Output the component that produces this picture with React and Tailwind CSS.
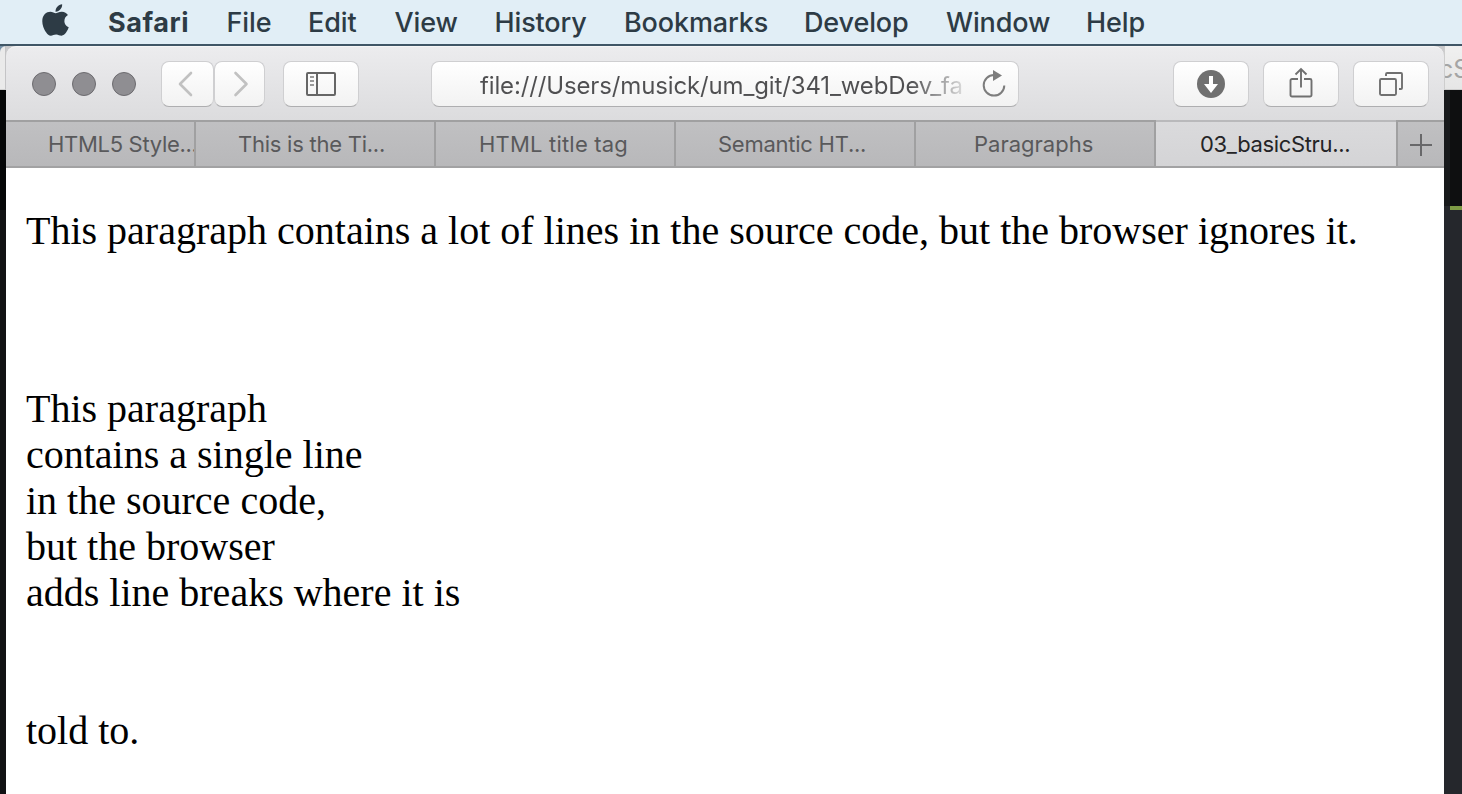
import React from "react";
import { FaApple } from "react-icons/fa";

const menus = [
  { label: "Safari", cls: "w-[118.500px] font-bold tracking-[0.55px]" },
  { label: "File", cls: "w-[81.500px]" },
  { label: "Edit", cls: "w-[86.500px]" },
  { label: "View", cls: "w-[100px]" },
  { label: "History", cls: "w-[129.500px]" },
  { label: "Bookmarks", cls: "w-[180px]" },
  { label: "Develop", cls: "w-[142px]" },
  { label: "Window", cls: "w-[140px]" },
  { label: "Help", cls: "w-[80px]" },
];

const tabs = [
  { label: "HTML5 Style...", cls: "w-[190px] pl-[42px] border-r-2 tracking-[-0.3px]" },
  { label: "This is the Ti...", cls: "w-[240px] pl-[42px] border-r-2 tracking-[-0.25px]" },
  { label: "HTML title tag", cls: "w-[240px] pl-[43px] border-r-2 tracking-[0.2px]" },
  { label: "Semantic HT...", cls: "w-[240px] pl-[42px] border-r-2 tracking-[-0.25px]" },
  { label: "Paragraphs", cls: "w-[240px] pl-[58px] border-r-2" },
];

const buttonCls =
  "flex h-[46px] shrink-0 items-center justify-center rounded-[8px] border border-[#cfcfd1] border-b-[#aeaeb0] bg-linear-to-b from-white to-[#f2f2f2]";

function MenuBar() {
  return (
    <header className="flex h-[46px] items-center border-b-2 border-[#405666] bg-[#e1eef6] pl-[40px] text-[27px] font-medium tracking-[-0.13px] text-[#2d3b45]">
      <div className="w-[68px] pb-[5px] pl-[2px]">
        <FaApple className="h-[36px] w-[27px]" />
      </div>
      {menus.map((m) => (
        <span key={m.label} className={`shrink-0 whitespace-nowrap pt-[2px] leading-[40px] ${m.cls}`}>
          {m.label}
        </span>
      ))}
    </header>
  );
}

function Light() {
  return <span className="h-6 w-6 rounded-full border border-[#6c6b6f] bg-[#8f8e92]" />;
}

function Toolbar() {
  return (
    <div className="flex h-[74px] items-center rounded-t-[10px] border-t border-[#f6f6f6] bg-linear-to-b from-[#ececee] to-[#dcdcde] pb-px pl-[26px] pr-[15px] pt-px">
      <div className="flex gap-4">
        <Light />
        <Light />
        <Light />
      </div>
      <div className={`ml-[25px] w-[53px] ${buttonCls}`}>
        <svg className="mr-[4px]" width="20" height="28" viewBox="0 0 20 28" fill="none" stroke="#c1c1c1" strokeWidth="2.6" strokeLinecap="round" strokeLinejoin="round">
          <path d="M15 3 4 14l11 11" />
        </svg>
      </div>
      <div className={`w-[51px] ${buttonCls}`}>
        <svg width="20" height="28" viewBox="0 0 20 28" fill="none" stroke="#c1c1c1" strokeWidth="2.6" strokeLinecap="round" strokeLinejoin="round">
          <path d="M5.500 3l11 11-11 11" />
        </svg>
      </div>
      <div className={`ml-[18px] w-[76px] ${buttonCls}`}>
        <svg width="30" height="24" viewBox="0 0 30 24" fill="none" stroke="#666" strokeWidth="2">
          <rect x="1" y="1" width="28" height="22" rx="1" />
          <path d="M11 1v22" />
          <path d="M4 5h4M4 9h4M4 13h4" stroke="#999" />
        </svg>
      </div>
      <div className={`ml-[72px] w-[588px] ${buttonCls}`}>
        <div className="mr-auto ml-[48px] w-[482px] overflow-hidden whitespace-nowrap bg-linear-to-r from-[#4f4f51] from-89% to-[#d8d8d8] bg-clip-text pt-[4px] text-[24px] leading-[32px] tracking-[-0.14px] text-transparent">
          file:///Users/musick/um_git/341_webDev_fa
        </div>
        <svg className="mr-[12px] shrink-0" width="24" height="28" viewBox="0 0 24 28" fill="none">
          <path d="M12 5A10.300 10.300 0 1 0 22.300 15.500" stroke="#7d7d7d" strokeWidth="2" />
          <path d="M11 0 20 5.500 11 11z" fill="#7d7d7d" />
        </svg>
      </div>
      <div className="ml-auto flex gap-[14px]">
        <div className={`w-[76px] ${buttonCls}`}>
          <svg width="28" height="28" viewBox="0 0 28 28">
            <circle cx="14" cy="14" r="14" fill="#707070" />
            <path d="M12 6h4v8h5l-7 9-7-9h5z" fill="#fff" />
          </svg>
        </div>
        <div className={`w-[76px] ${buttonCls}`}>
          <svg className="-mt-[1px]" width="24" height="32" viewBox="0 0 24 32" fill="none" stroke="#707070" strokeWidth="1.900">
            <path d="M9 12H3a1.500 1.500 0 0 0-1.500 1.500V28A1.500 1.500 0 0 0 3 29.500h18a1.500 1.500 0 0 0 1.500-1.500V13.500A1.500 1.500 0 0 0 21 12h-6" />
            <path d="M12 20.500V2M6.500 7.500 12 2l5.500 5.500" />
          </svg>
        </div>
        <div className={`w-[76px] ${buttonCls}`}>
          <svg width="24" height="24" viewBox="0 0 24 24" fill="none" stroke="#707070" strokeWidth="1.900">
            <rect x="1" y="7" width="16" height="16" rx="1.200" />
            <path d="M7 4V2.200A1.200 1.200 0 0 1 8.200 1H22a1 1 0 0 1 1 1v14a1 1 0 0 1-1 1h-2" />
          </svg>
        </div>
      </div>
    </div>
  );
}

function TabBar() {
  return (
    <div className="flex h-[48px] border-b-2 border-[#a2a2a3] text-[22px] leading-[44px] text-[#59595b]">
      {tabs.map((t) => (
        <div key={t.label} className={`shrink-0 overflow-hidden whitespace-nowrap border-t-2 border-[#a0a0a1] bg-linear-to-b from-[#c0c0c2] to-[#b8b8ba] ${t.cls}`}>
          {t.label}
        </div>
      ))}
      <div className="w-[240px] shrink-0 border-t-2 border-[#b9b9bb] bg-linear-to-b from-[#dadadc] to-[#d4d4d6] pl-[44px] tracking-[-0.35px] text-[#242426]">
        03_basicStru...
      </div>
      <div className="flex w-[48px] items-center justify-center border-l-2 border-t-2 border-[#a0a0a1] bg-linear-to-b from-[#c0c0c2] to-[#b8b8ba] pt-[2px]">
        <svg width="22" height="22" viewBox="0 0 22 22" stroke="#68686a" strokeWidth="2">
          <path d="M11 0v22M0 11h22" />
        </svg>
      </div>
    </div>
  );
}

export default function App() {
  return (
    <div className="flex h-[794px] w-[1462px] flex-col overflow-hidden font-['Inter',sans-serif]">
      <MenuBar />
      <div className="flex flex-1 bg-linear-to-b from-[#c9c9cb] to-[#e3e3e3] to-[44px]">
        <div className="flex w-[6px] flex-col bg-[#7690a6]">
          <div className="h-[44px] rounded-tl-[8px] border-b border-r border-b-[#cfcfcf] border-r-[#c4c4c6] bg-[#eaeaea]" />
          <div className="h-[120px] bg-[#050607]" />
          <div className="flex-1 bg-[#111214]" />
        </div>
        <main className="flex w-[1438px] flex-col">
          <Toolbar />
          <TabBar />
          <div className="flex-1 bg-white px-[20px] pt-[40px] font-['Liberation_Serif',serif] text-[40px] leading-[46px] text-black">
            <p className="mb-[132px] whitespace-nowrap">
              This paragraph contains a lot of lines in the source code, but the browser ignores it.
            </p>
            <p>
              This paragraph
              <br />
              contains a single line
              <br />
              in the source code,
              <br />
              but the browser
              <br />
              adds line breaks where it is
              <br />
              <br />
              <br />
              told to.
            </p>
          </div>
        </main>
        <aside className="flex w-[18px] flex-col bg-[#25272c]">
          <div className="flex h-[44px] overflow-hidden border-b border-l border-[#cdcdcd] bg-linear-to-b from-[#f0f0f0] to-[#e6e6e6] text-[25px] leading-[46px] text-[#a5a5a5]">
            <span className="-ml-[6px]">cS</span>
          </div>
          <div className="h-[116px] border-l-[6px] border-[#181a1c] bg-[#0e0f10]" />
          <div className="ml-[6px] h-[4px] bg-[#7e9b45]" />
        </aside>
      </div>
    </div>
  );
}
